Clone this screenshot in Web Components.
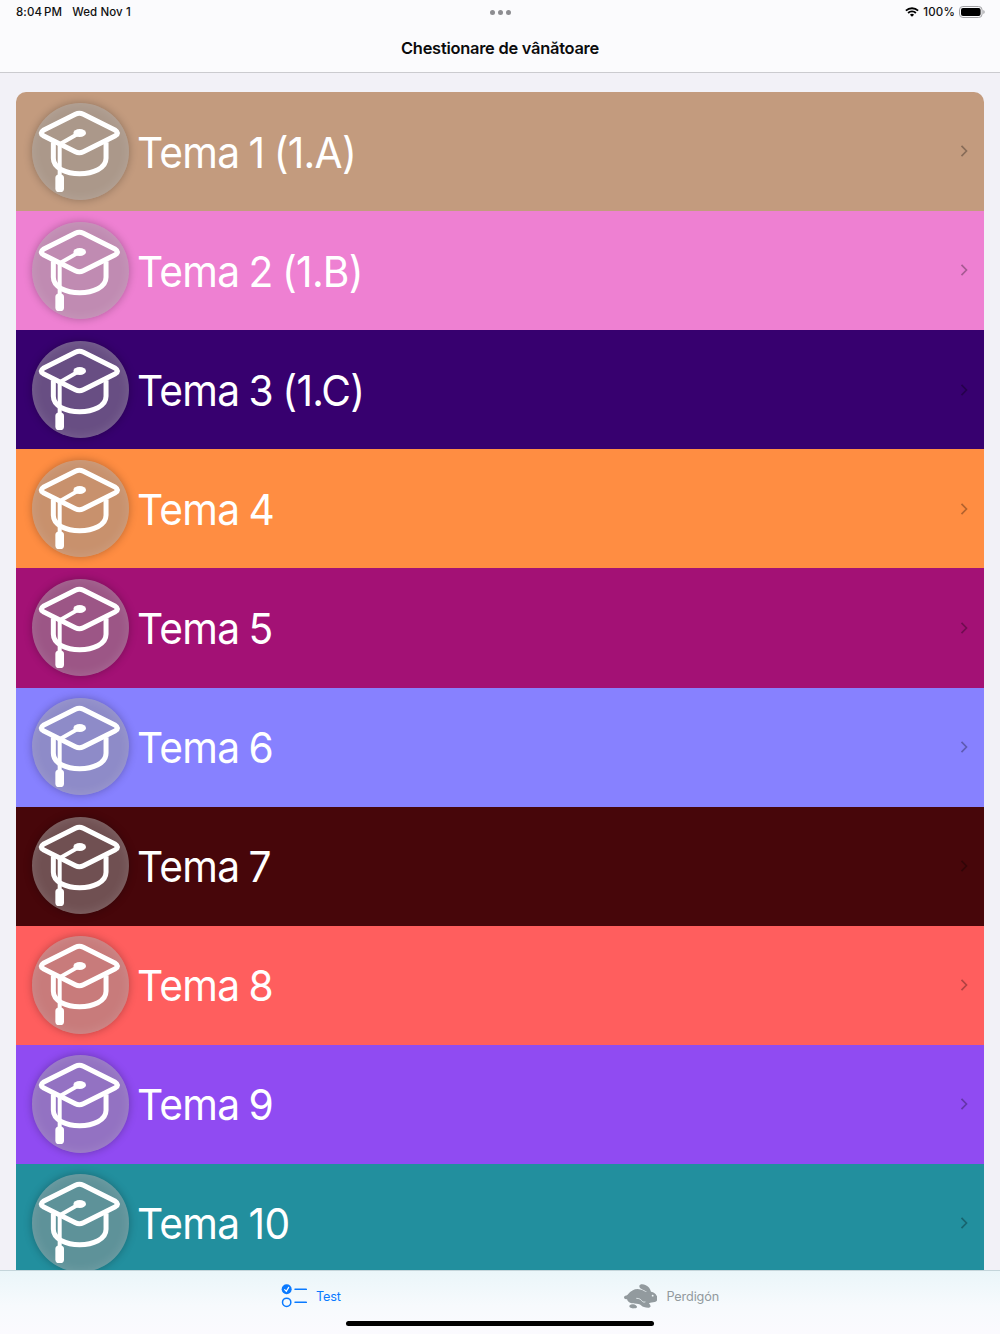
<!DOCTYPE html>
<html lang="ro">
<head>
<meta charset="utf-8">
<title>Chestionare de vânătoare</title>
<style>
  body {
    margin: 0;
    font-family: Inter, "Liberation Sans", sans-serif;
  }
</style>
</head>
<body>
<quiz-app></quiz-app>

<script>
class StatusBar extends HTMLElement {
  constructor() {
    super();
    const shadow = this.attachShadow({ mode: "open" });

    shadow.innerHTML = `
      <style>
        :host {
          display: grid;
          grid-template-columns: 1fr auto 1fr;
          align-items: center;
          height: 24px;
          padding: 0 15px 0 16px;
          font-size: 11.5px;
          font-weight: 500;
          line-height: 24px;
          color: #111;
        }
        .left, .right, .dots { display: flex; align-items: center; }
        .left { gap: 10px; letter-spacing: 0.1px; white-space: nowrap; }
        .time { word-spacing: -1.2px; }
        .right { justify-content: flex-end; gap: 4px; letter-spacing: 0.15px; }
        .dots { gap: 3px; margin-right: 1px; }
        .dots i { width: 5px; height: 5px; border-radius: 50%; background: #8d8d91; }
        svg { display: block; }
      </style>
      <div class="left"><span class="time">8:04 PM</span><span>Wed Nov 1</span></div>
      <div class="dots"><i></i><i></i><i></i></div>
      <div class="right">
        <svg width="14" height="10" viewBox="0 0 14 10" fill="none" stroke="#000" stroke-width="1.8">
          <path d="M.9 3.7a8.8 8.8 0 0 1 12.2 0M3.1 6a5.6 5.6 0 0 1 7.8 0"/>
          <path d="M7 9.8 4.9 7.7a3 3 0 0 1 4.2 0z" fill="#000" stroke="none"/>
        </svg>
        <span>100%</span>
        <svg width="26" height="12" viewBox="0 0 26 12">
          <rect x=".5" y=".5" width="22.6" height="11" rx="3.4" fill="none" stroke="#a2a2a5"/>
          <rect x="2" y="2" width="19.6" height="8" rx="2" fill="#000"/>
          <path d="M24.3 4v4q1.4-.5 1.4-2t-1.4-2" fill="#a2a2a5"/>
        </svg>
      </div>`;
  }
}

class NavHeader extends HTMLElement {
  constructor() {
    super();
    const shadow = this.attachShadow({ mode: "open" });

    shadow.innerHTML = `
      <style>
        :host {
          display: block;
          box-sizing: border-box;
          height: 73px;
          background: #fbfbfd;
          border-bottom: 1px solid #cbcbcf;
        }
        h1 {
          margin: 0;
          font-size: 16.4px;
          font-weight: 600;
          line-height: 48px;
          letter-spacing: -0.24px;
          text-align: center;
          color: #0b0b0c;
        }
      </style>
      <status-bar></status-bar>
      <h1><slot></slot></h1>`;
  }
}

class CapBadge extends HTMLElement {
  constructor() {
    super();
    const shadow = this.attachShadow({ mode: "open" });

    shadow.innerHTML = `
      <style>
        :host {
          display: block;
          width: 97.4px;
          height: 97.4px;
          border-radius: 50%;
          background: rgba(150, 150, 150, 0.52);
          box-shadow: 0 0 9px rgba(0, 0, 0, 0.27), inset 0 0 12px rgba(255, 255, 255, 0.14);
        }
        svg { display: block; width: 100%; height: 100%; }
      </style>
      <svg viewBox="1 0 292 292" fill="none" stroke="#fff" stroke-width="15" stroke-linejoin="round" stroke-linecap="round">
        <path d="M131 34Q143 28 155 34L251 82Q264 90 251 98L155 146Q143 152 131 146L35 98Q22 90 35 82Z"/>
        <path d="M65 118V166C65 196 104 212 144 212S223 196 223 166V118" stroke-linecap="butt"/>
        <path d="M143 90 84 124V220" stroke-width="12"/>
        <ellipse cx="144" cy="90" rx="19" ry="12" fill="#fff" stroke="none"/>
        <rect x="71" y="214" width="26" height="53" rx="11" fill="#fff" stroke="none"/>
      </svg>`;
  }
}

class TopicRow extends HTMLElement {
  constructor() {
    super();
    const shadow = this.attachShadow({ mode: "open" });

    shadow.innerHTML = `
      <style>
        :host {
          display: flex;
          align-items: center;
          box-sizing: border-box;
          height: 119.07px;
          padding: 0 15px 0.6px 15.5px;
          background: var(--row-color);
          color: #fff;
        }
        .label {
          flex: 1;
          margin-left: 8px;
          padding-top: 0.6px;
          font-size: 43px;
          line-height: 60px;
          letter-spacing: -0.8px;
          word-spacing: -1.4px;
          white-space: nowrap;
          transform: scaleX(0.946);
          transform-origin: left;
        }
        svg { display: block; }
      </style>
      <cap-badge></cap-badge>
      <span class="label"><slot></slot></span>
      <svg width="10" height="14" viewBox="0 0 10 14" fill="none" stroke="#000" stroke-opacity="0.3" stroke-width="1.7">
        <path d="m2.5 1.8 5 5.2-5 5.2"/>
      </svg>`;
  }
  connectedCallback() {
    this.style.setProperty("--row-color", this.getAttribute("color") || "#888");
  }
}

class TabItem extends HTMLElement {
  constructor() {
    super();
    const shadow = this.attachShadow({ mode: "open" });

    shadow.innerHTML = `
      <style>
        :host {
          display: flex;
          align-items: center;
          height: 50px;
          gap: 9px;
          font-size: 12.7px;
          letter-spacing: -0.15px;
          color: #929a9e;
        }
        :host([active]) { color: #0a7aff; }
      </style>
      <slot name="icon"></slot>
      <span><slot></slot></span>`;
  }
}

class TabBar extends HTMLElement {
  constructor() {
    super();
    const shadow = this.attachShadow({ mode: "open" });

    shadow.innerHTML = `
      <style>
        :host {
          display: flex;
          flex-direction: column;
          align-items: center;
          box-sizing: border-box;
          height: 64px;
          border-top: 1px solid #c4d5da;
          background: linear-gradient(#eaf6f9, #f7fafd 55%, #fbfafe);
        }
        nav { display: flex; width: 438px; justify-content: space-between; }
        .home { width: 308px; height: 5px; border-radius: 3px; background: #000; }
        svg { display: block; }
      </style>
      <nav>
        <tab-item active>
          <svg slot="icon" width="26" height="24" viewBox="0 0 78 72" fill="none" stroke="currentColor" stroke-width="4.5" stroke-linecap="round">
            <circle cx="17" cy="16" r="15" fill="currentColor" stroke="none"/>
            <path d="m11 17 5 5 7-12" stroke="#fff" stroke-width="3.5"/>
            <circle cx="17" cy="55" r="12.5" stroke-width="4.5"/>
            <path d="M42 16H76M42 55H76"/>
          </svg>
          Test
        </tab-item>
        <tab-item>
          <svg slot="icon" width="34" height="25" viewBox="-3 0 102 75" fill="currentColor">
            <path d="M0 40C1 35 7 37 12 31C20 21 30 15 41 15C53 15 60 22 70 25C62 18 46 16 46 7C46 0 57 0 64 3C74 7 79 15 81 23C90 24 95 29 98 35C103 43 101 52 92 54C86 56 80 55 75 58C77 61 81 65 79 69C76 73 66 71 60 69C53 68 51 61 43 60C36 59 28 59 20 57C13 55 10 50 9 45C6 47 0 45 0 40Z"/>
            <path d="M17 64C22 59 32 61 37 65C42 70 37 73 30 73C22 74 13 70 17 64Z"/>
            <circle cx="86" cy="35" r="2.8" fill="#f0f8fa"/>
            <path d="M38 43C46 43 50 46 53 50C56 54 59 55 63 54" fill="none" stroke="#f0f8fa" stroke-width="2.4" stroke-linecap="round"/>
          </svg>
          Perdigón
        </tab-item>
      </nav>
      <div class="home"></div>`;
  }
}

const topics = [
  { name: "Tema 1 (1.A)", color: "#c39b7e" },
  { name: "Tema 2 (1.B)", color: "#ee80d2" },
  { name: "Tema 3 (1.C)", color: "#37006f" },
  { name: "Tema 4", color: "#ff8d42" },
  { name: "Tema 5", color: "#a31175" },
  { name: "Tema 6", color: "#8781ff" },
  { name: "Tema 7", color: "#47060a" },
  { name: "Tema 8", color: "#ff5e5e" },
  { name: "Tema 9", color: "#904bf2" },
  { name: "Tema 10", color: "#228f9e" },
];

class QuizApp extends HTMLElement {
  constructor() {
    super();
    const shadow = this.attachShadow({ mode: "open" });

    shadow.innerHTML = `
      <style>
        :host {
          display: flex;
          flex-direction: column;
          height: 1334px;
          overflow: hidden;
          background: #f2f1f7;
        }
        nav-header, tab-bar { flex: none; }
        main { flex: 1; min-height: 0; overflow: hidden; padding: 19.2px 16px 0; }
        .list { border-radius: 10px 10px 0 0; overflow: hidden; }
      </style>
      <nav-header>Chestionare de vânătoare</nav-header>
      <main><div class="list"></div></main>
      <tab-bar></tab-bar>`;
  }
  connectedCallback() {
    const list = this.shadowRoot.querySelector(".list");
    topics.forEach((t) => {
      const row = document.createElement("topic-row");
      row.setAttribute("color", t.color);
      row.textContent = t.name;
      list.appendChild(row);
    });
  }
}

customElements.define("status-bar", StatusBar);
customElements.define("nav-header", NavHeader);
customElements.define("cap-badge", CapBadge);
customElements.define("topic-row", TopicRow);
customElements.define("tab-item", TabItem);
customElements.define("tab-bar", TabBar);
customElements.define("quiz-app", QuizApp);
</script>
</body>
</html>
